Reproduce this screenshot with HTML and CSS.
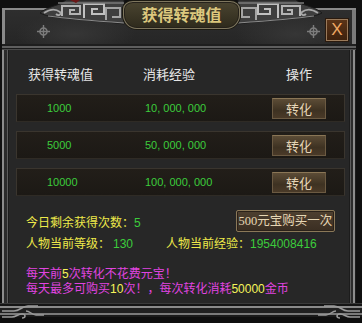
FILE: index.html
```html
<!DOCTYPE html>
<html lang="zh">
<head>
<meta charset="utf-8">
<title>获得转魂值</title>
<link rel="stylesheet" href="styles.css">
</head>
<body>
<div class="window">
  <div class="frame">
    <div class="header"></div>
    <div class="sep"></div>
    <div class="content">
      <div class="thead">
        <span class="h1">获得转魂值</span><span class="h2">消耗经验</span><span class="h3">操作</span>
      </div>
      <div class="rows">
        <div class="row"><span class="v1">1000</span><span class="v2">10, 000, 000</span><button class="btn">转化</button></div>
        <div class="row"><span class="v1">5000</span><span class="v2">50, 000, 000</span><button class="btn">转化</button></div>
        <div class="row"><span class="v1">10000</span><span class="v2">100, 000, 000</span><button class="btn">转化</button></div>
      </div>
      <div class="info1">
        <span class="yl">今日剩余获得次数：<span class="gr">5</span></span>
        <button class="buy">500元宝购买一次</button>
      </div>
      <div class="info2">
        <span class="yl lab1">人物当前等级：</span><span class="gr val1">130</span><span class="yl lab2">人物当前经验：</span><span class="gr">1954008416</span>
      </div>
      <div class="notes">
        <p>每天前<span class="num">5</span>次转化不花费元宝！</p>
        <p>每天最多可购买<span class="num">10</span>次！，每次转化消耗<span class="num">50000</span>金币</p>
      </div>
    </div>
  </div>
  <div class="bottom"></div>

  <div class="orn-layer">
    <svg width="362" height="34" viewBox="0 0 362 34">
      <g>
        <path d="M40 13 C46 8 54 6 60 4 L66 0 H124 V24 C110 22 96 21 84 20 C72 19 62 18 54 17 C48 16 44 15 40 13 Z" fill="#3e3e3e" stroke="#1a1a1a" stroke-width="1"/>
        <path d="M44 13 C50 9 56 9 60 12 C62 15 58 16 56 14" fill="none" stroke="#a8a8a8" stroke-width="1.8"/>
        <path d="M62 16 V6 H80 V14 H70 V10 H75" fill="none" stroke="#b4b4b4" stroke-width="2"/>
        <path d="M84 18 V4 H104 V14 H92 V9 H98" fill="none" stroke="#c0c0c0" stroke-width="2"/>
        <path d="M106 20 V8 H120 V17 H112" fill="none" stroke="#a4a4a4" stroke-width="2"/>
        <path d="M58 3 H124" stroke="#7a7a7a" stroke-width="1.5"/>
        <path d="M48 16 C70 19 96 21 124 23" fill="none" stroke="#8a8a8a" stroke-width="1.2"/>
        <path d="M70 0 H80 L76 3 Z" fill="#6a1616"/>
      </g>
      <g transform="translate(362,0) scale(-1,1)">
        <path d="M40 13 C46 8 54 6 60 4 L66 0 H124 V24 C110 22 96 21 84 20 C72 19 62 18 54 17 C48 16 44 15 40 13 Z" fill="#3e3e3e" stroke="#1a1a1a" stroke-width="1"/>
        <path d="M44 13 C50 9 56 9 60 12 C62 15 58 16 56 14" fill="none" stroke="#a8a8a8" stroke-width="1.8"/>
        <path d="M62 16 V6 H80 V14 H70 V10 H75" fill="none" stroke="#b4b4b4" stroke-width="2"/>
        <path d="M84 18 V4 H104 V14 H92 V9 H98" fill="none" stroke="#c0c0c0" stroke-width="2"/>
        <path d="M106 20 V8 H120 V17 H112" fill="none" stroke="#a4a4a4" stroke-width="2"/>
        <path d="M58 3 H124" stroke="#7a7a7a" stroke-width="1.5"/>
        <path d="M48 16 C70 19 96 21 124 23" fill="none" stroke="#8a8a8a" stroke-width="1.2"/>
      </g>
    </svg>
  </div>

  <div class="corner-layer">
    <svg width="362" height="20" viewBox="0 0 362 20">
      <g fill="none" stroke="#9a9a9a" stroke-width="1.5">
        <path d="M2 8 H14 C20 8 22 3 28 3 H38"/>
        <path d="M2 14 H12 C16 14 18 11 22 11 C26 11 26 15 22 15"/>
        <path d="M26 8 C30 8 32 12 36 12 H44"/>
      </g>
      <g transform="translate(362,0) scale(-1,1)" fill="none" stroke="#9a9a9a" stroke-width="1.5">
        <path d="M2 8 H14 C20 8 22 3 28 3 H38"/>
        <path d="M2 14 H12 C16 14 18 11 22 11 C26 11 26 15 22 15"/>
        <path d="M26 8 C30 8 32 12 36 12 H44"/>
      </g>
    </svg>
  </div>

  <div class="cross cross-l">
    <svg width="13" height="13" viewBox="0 0 13 13">
      <circle cx="6.5" cy="6.5" r="3.5" fill="none" stroke="#7c7c7c" stroke-width="1.6"/>
      <path d="M6.5 0 V13 M0 6.5 H13" stroke="#7c7c7c" stroke-width="1.4"/>
    </svg>
  </div>
  <div class="cross cross-r">
    <svg width="13" height="13" viewBox="0 0 13 13">
      <circle cx="6.5" cy="6.5" r="3.5" fill="none" stroke="#7c7c7c" stroke-width="1.6"/>
      <path d="M6.5 0 V13 M0 6.5 H13" stroke="#7c7c7c" stroke-width="1.4"/>
    </svg>
  </div>

  <div class="plaque"><span class="title">获得转魂值</span></div>
  <button class="close">X</button>
</div>
</body>
</html>
```

FILE: styles.css
```css
* { box-sizing: border-box; }
html, body { margin: 0; padding: 0; }
body {
  background: #0e0e0e;
  font-family: "Liberation Sans", "Noto Sans CJK SC", sans-serif;
  font-size: 12px;
}
.window {
  position: relative;
  width: 362px;
  height: 323px;
  overflow: hidden;
  background: #101010;
}
.frame {
  margin: 8px 6px 0 2px;
  height: 295px;
  padding: 0 7px;
  display: flex;
  flex-direction: column;
  background:
    linear-gradient(to right, #8c8c8c 0 2px, #2b2b2b 2px 5px, #5c5c5c 5px 6px, #1c1c1c 6px 7px, transparent 7px),
    linear-gradient(to left, #1c1c1c 0 1px, #8c8c8c 1px 3px, #2b2b2b 3px 5px, #5c5c5c 5px 6px, #1c1c1c 6px 7px, transparent 7px);
  border-top: 2px solid #8a8a8a;
}
.header {
  height: 34px;
  margin: 0 -7px;
  background:
    radial-gradient(ellipse 60px 20px at 70px 24px, #363636, transparent),
    radial-gradient(ellipse 60px 20px at 290px 24px, #363636, transparent),
    linear-gradient(#2e2e2e, #262626);
  border-left: 3px solid #8a8a8a;
  border-right: 4px solid #7a7a7a;
}
.sep {
  height: 6px;
  margin: 0 -7px;
  background: linear-gradient(#1e1e1e 0 2px, #5e5e5e 2px 4px, #1a1a1a 4px 5px, #4a4a4a 5px 6px);
}
.content {
  flex: 1;
  background: #272727;
  display: flex;
  flex-direction: column;
}
.thead {
  margin-top: 17px;
  padding-left: 19px;
  height: 16px;
  line-height: 16px;
  color: #e6e6e6;
  font-size: 13px;
  white-space: nowrap;
}
.thead span { display: inline-block; }
.h1 { width: 115px; }
.h2 { width: 143px; }
.rows {
  margin: 11px 4px 0 7px;
  display: flex;
  flex-direction: column;
  gap: 9px;
}
.row {
  height: 28px;
  display: flex;
  align-items: center;
  padding-left: 30px;
  background: linear-gradient(#221e19, #1c1915);
  border: 1px solid #3a352e;
  border-bottom-color: #2f2b25;
  color: #3ccc3c;
  font-size: 11px;
}
.v1 { width: 98px; }
.v2 { width: 127px; }
.btn {
  width: 54px;
  height: 21px;
  padding: 0;
  border: 1px solid #6b5a42;
  border-top-color: #8a7656;
  background: linear-gradient(#5c4c36, #3e3222 60%, #4a3a28);
  color: #e6d6b8;
  font-family: "Noto Sans CJK SC", sans-serif;
  font-size: 13px;
  line-height: 19px;
}
.info1 {
  margin-top: 14px;
  height: 22px;
  padding: 0 14px 0 17px;
  display: flex;
  align-items: center;
  justify-content: space-between;
}
.yl { color: #eeea4a; }
.gr { color: #3ccc3c; }
.buy {
  width: 99px;
  height: 22px;
  padding: 0;
  border: 1px solid #8a7858;
  border-radius: 2px;
  background: linear-gradient(#4e4030, #3a2e22);
  color: #e6d6b4;
  font-family: "Liberation Serif", "Noto Sans CJK SC", serif;
  font-size: 12.5px;
  line-height: 20px;
  box-shadow: inset 0 0 0 1px #2a2119;
}
.info2 {
  margin-top: 5px;
  height: 14px;
  line-height: 14px;
  padding-left: 17px;
  white-space: nowrap;
}
.info2 span { display: inline-block; }
.lab1 { width: 87px; }
.val1 { width: 53px; }
.lab2 { width: 84px; }
.notes {
  margin-top: 16px;
  padding-left: 17px;
  color: #e044e0;
  line-height: 15px;
  white-space: nowrap;
}
.notes p { margin: 0; }
.num { color: #f4f45a; }
.bottom {
  height: 20px;
  background: linear-gradient(#3a3a3a 0 1px, #151515 1px 3px, #8a8a8a 3px 5px, #202020 5px 10px, #7a7a7a 10px 12px, #1a1a1a 12px 14px, #0e0e0e 14px);
}
.orn-layer {
  position: absolute;
  left: 0;
  top: 0;
  width: 362px;
  height: 34px;
  z-index: 1;
}
.orn-layer svg, .corner-layer svg, .cross svg { display: block; }
.corner-layer {
  position: absolute;
  left: 0;
  top: 303px;
  width: 362px;
  height: 20px;
  z-index: 1;
}
.cross {
  position: absolute;
  top: 25px;
  width: 13px;
  height: 13px;
  z-index: 1;
}
.cross-l { left: 37px; }
.cross-r { left: 307px; }
.plaque {
  position: absolute;
  z-index: 2;
  left: 123px;
  top: 1px;
  width: 117px;
  height: 28px;
  border: 1px solid #7e765e;
  border-radius: 10px 10px 14px 14px / 8px 8px 14px 14px;
  background: linear-gradient(#4a4430, #2e2a1c);
  box-shadow: 0 0 0 1px #1c1a12, inset 0 0 0 1px #25211a;
  text-align: center;
}
.title {
  display: block;
  margin-top: 1px;
  font-family: "Noto Sans CJK SC", sans-serif;
  font-size: 16px;
  font-weight: 700;
  line-height: 22px;
  color: #dcc87e;
}
.close {
  position: absolute;
  z-index: 2;
  left: 326px;
  top: 19px;
  width: 22px;
  height: 22px;
  padding: 0;
  border: 1px solid #9a7a5a;
  background: linear-gradient(#5a3418, #3e220e);
  box-shadow: 0 0 0 1px #2a1a0e;
  color: #f0a864;
  font-family: "Liberation Sans", sans-serif;
  font-size: 17px;
  line-height: 20px;
}
```
